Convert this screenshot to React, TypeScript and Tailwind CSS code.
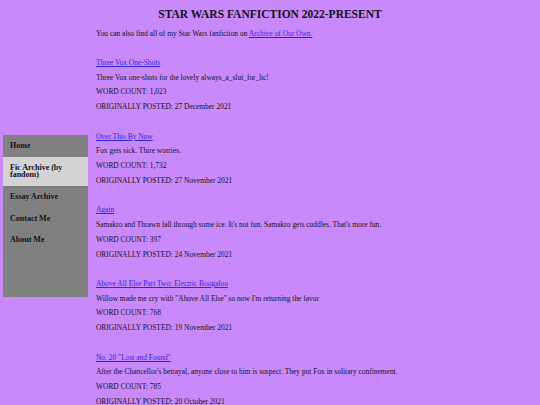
import React from "react";

type Fic = {
  title: string;
  summary: string;
  words: string;
  posted: string;
};

const fics: Fic[] = [
  {
    title: "Three Vox One-Shots",
    summary: "Three Vox one-shots for the lovely always_a_slut_for_hc!",
    words: "1,023",
    posted: "27 December 2021",
  },
  {
    title: "Over This By Now",
    summary: "Fox gets sick. Thire worries.",
    words: "1,732",
    posted: "27 November 2021",
  },
  {
    title: "Again",
    summary:
      "Samakro and Thrawn fall through some ice. It's not fun. Samakro gets cuddles. That's more fun.",
    words: "397",
    posted: "24 November 2021",
  },
  {
    title: "Above All Else Part Two: Electric Boogaloo",
    summary:
      'Willow made me cry with "Above All Else" so now I\'m returning the favor',
    words: "768",
    posted: "19 November 2021",
  },
  {
    title: 'No. 20 "Lost and Found"',
    summary:
      "After the Chancellor's betrayal, anyone close to him is suspect. They put Fox in solitary confinement.",
    words: "785",
    posted: "20 October 2021",
  },
];

const navItems = ["Home", "Fic Archive (by fandom)", "Essay Archive", "Contact Me", "About Me"];

const Line: React.FC<{ children?: React.ReactNode }> = ({ children }) => (
  <div className="h-[14.74px] leading-[14.74px] whitespace-nowrap">{children}</div>
);

const App: React.FC = () => {
  return (
    <div
      className="min-h-[405px] bg-[#c88afa] text-[#141018] flex"
      style={{ fontFamily: '"Liberation Serif", "Times New Roman", serif' }}
    >
      {/* sidebar */}
      <nav className="ml-[3px] mt-[135px] w-[85px] h-[162px] shrink-0 bg-[#808080]">
        {navItems.map((item) => (
          <div
            key={item}
            className={`px-[7px] py-[7.2px] text-[8px] leading-[7.3px] font-bold ${
              item.startsWith("Fic") ? "bg-[#d3d3d3]" : ""
            }`}
          >
            {item}
          </div>
        ))}
      </nav>

      <main className="flex-1 pl-[8px] pr-[96px] pt-[8px] text-[7.45px]">
        <h1 className="text-center font-bold text-[11.5px] leading-[12px] whitespace-nowrap">
          STAR WARS FANFICTION 2022-PRESENT
        </h1>
        <div className="mt-[6.5px]">
          <Line>
            You can also find all of my Star Wars fanfiction on{" "}
            <a href="#" className="text-[#3422e4] underline">
              Archive of Our Own.
            </a>
          </Line>
          {fics.map((fic) => (
            <React.Fragment key={fic.title}>
              <Line />
              <Line>
                <a href="#" className="text-[#3422e4] underline">
                  {fic.title}
                </a>
              </Line>
              <Line>{fic.summary}</Line>
              <Line>WORD COUNT: {fic.words}</Line>
              <Line>ORIGINALLY POSTED: {fic.posted}</Line>
            </React.Fragment>
          ))}
        </div>
      </main>
    </div>
  );
};

export default App;
